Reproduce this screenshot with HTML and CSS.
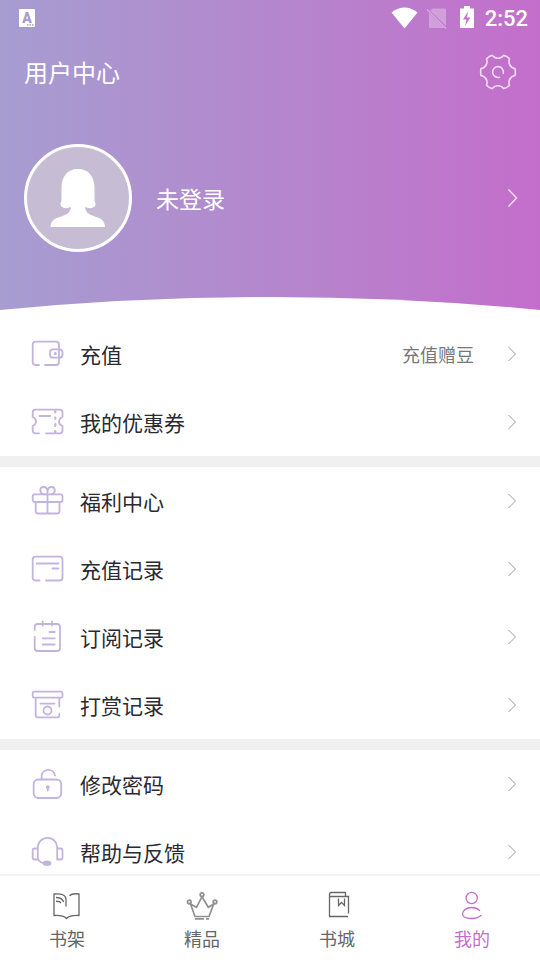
FILE: index.html
```html
<!DOCTYPE html>
<html lang="zh-CN">
<head>
<meta charset="utf-8">
<meta name="viewport" content="width=device-width, initial-scale=1">
<title>用户中心</title>
<link rel="stylesheet" href="styles.css">
</head>
<body>
<div class="app">
  <header class="hero">
    <div class="status">
      <span class="status-app">A<svg class="dots" width="7" height="2" viewBox="0 0 7 2" aria-hidden="true"><path d="M0 1H7" stroke="#a99ad0" stroke-width="1.500" stroke-dasharray="1.500 1"/></svg></span>
      <svg class="status-icons" width="86" height="24" viewBox="0 0 86 24" aria-hidden="true">
        <path d="M0.500 6.500Q13.500-3.500 26.500 6.500L13.500 22.500Z" fill="#fff"/>
        <path d="M42 2.500h11.500q1.500 0 1.500 1.500v16L39 4.500zM38 7l15.500 15H39.500q-1.500 0-1.500-1.500z" fill="#fff" opacity=".3"/>
        <path d="M36 3.500L55 22.500" stroke="#fff" stroke-width="1.500" opacity=".35"/>
        <path fill-rule="evenodd" d="M69 2.500h4v-2.500h6v2.500h4v19.500h-14zM77 5.500l-5 8h3.500l-1.500 6.500 5.500-8.500h-3.500z" fill="#fff"/>
      </svg>
      <time class="clock">2:52</time>
    </div>
    <div class="titlebar">
      <h1 class="title">用户中心</h1>
      <button class="icon-button" type="button" aria-label="设置">
        <svg width="36" height="36" viewBox="-18 -18 36 36" fill="none" stroke="#fff" stroke-opacity=".75" stroke-width="1.600" stroke-linejoin="round" stroke-linecap="round">
          <path d="M17 -3.500Q17.700 0 17 3.500A7 7 0 0 0 11.500 13.200Q9 16 5.600 16.600A7 7 0 0 0 -5.600 16.600Q-9 16 -11.500 13.200A7 7 0 0 0 -17 3.500Q-17.700 0 -17 -3.500A7 7 0 0 0 -11.500 -13.200Q-9 -16 -5.600 -16.600A7 7 0 0 0 5.600 -16.600Q9 -16 11.500 -13.200A7 7 0 0 0 17 -3.500Z"/>
          <path d="M5.200 1.500A5.400 5.400 0 1 0 1.500 5.200"/>
        </svg>
      </button>
    </div>
    <a class="profile" href="#login">
      <svg class="avatar" width="108" height="108" viewBox="0 0 108 108" aria-hidden="true">
        <circle cx="54" cy="54" r="52.500" fill="#c6bdd5" stroke="#fff" stroke-width="3"/>
        <path d="M54 25C43 25 37.500 33 37.500 44L37.500 57Q35.500 60 37.300 62.500Q41 65.500 47 63Q47 68 41 71C34 74 27 74 26.500 83H81C80.500 74 74 74 67 71Q61 68 61 63Q67 65.500 70.700 62.500Q72.500 60 70.500 57L70.500 44C70.500 33 65 25 54 25Z" fill="#fff"/>
      </svg>
      <span class="profile-name">未登录</span>
      <svg class="profile-arrow" width="12" height="20" viewBox="0 0 12 20" aria-hidden="true"><path d="M1.500 1.500L9.500 10L1.500 18.500" fill="none" stroke="#fff" stroke-opacity=".75" stroke-width="1.500"/></svg>
    </a>
    <svg class="curve" viewBox="0 0 540 13" preserveAspectRatio="none" aria-hidden="true"><path d="M0 13Q135 0 270 0T540 13Z" fill="#fff"/></svg>
  </header>

  <main class="menu">
    <section class="group">
      <a class="row" href="#recharge">
        <svg class="row-icon" viewBox="0 0 36 36"><path d="M9 29H5.500Q2.700 29 2.700 26V8.500Q2.700 5.700 5.500 5.700H26Q29 5.700 29 8.500V26Q29 29 26 29H15"/><rect x="20" y="13.300" width="12.500" height="8.400" rx="3"/><circle cx="25.300" cy="17.500" r=".7"/></svg>
        <span class="label">充值</span><span class="note">充值赠豆</span>
        <svg class="arrow" viewBox="0 0 10 16"><path d="M1.500 1L8.500 8L1.500 15"/></svg>
      </a>
      <a class="row" href="#coupons">
        <svg class="row-icon" viewBox="0 0 36 36"><path d="M9 29.300H5.500Q2.700 29.300 2.700 26.500V22Q6 20.500 6 17.500T2.700 13V8.500Q2.700 5.700 5.500 5.700H29.700Q32.500 5.700 32.500 8.500V13Q29 14.500 29 17.500T32.500 22V26.500Q32.500 29.300 29.700 29.300H16"/><path class="bold" d="M9.500 12H20M25.300 7V8.500M25.300 13.500V15M25.300 20V22M25.300 27V28.500"/></svg>
        <span class="label">我的优惠券</span>
        <svg class="arrow" viewBox="0 0 10 16"><path d="M1.500 1L8.500 8L1.500 15"/></svg>
      </a>
    </section>
    <section class="group">
      <a class="row" href="#welfare">
        <svg class="row-icon" viewBox="0 0 36 36"><rect x="2.700" y="11.300" width="29.800" height="7.700" rx="2"/><path d="M5.700 19V28Q5.700 30.500 8 30.500H27Q29.500 30.500 29.500 28V19M17.500 8V30.500M17.500 11.300H13.500Q10.300 10.500 10.300 7.500Q10.300 4 13.500 4Q17 4 17.500 8Q18 4 21.500 4Q24.800 4 24.800 7.500Q24.800 10.500 21.500 11.300"/></svg>
        <span class="label">福利中心</span>
        <svg class="arrow" viewBox="0 0 10 16"><path d="M1.500 1L8.500 8L1.500 15"/></svg>
      </a>
      <a class="row" href="#recharge-log">
        <svg class="row-icon" viewBox="0 0 36 36"><path d="M9.500 29.500H5.500Q2.700 29.500 2.700 26.500V8.500Q2.700 5.700 5.500 5.700H29.700Q32.500 5.700 32.500 8.500V26.500Q32.500 29.500 29.700 29.500H16M6.700 12.500H28.500M22.500 17.500H28.500"/></svg>
        <span class="label">充值记录</span>
        <svg class="arrow" viewBox="0 0 10 16"><path d="M1.500 1L8.500 8L1.500 15"/></svg>
      </a>
      <a class="row" href="#subscriptions">
        <svg class="row-icon" viewBox="0 0 36 36"><path d="M4.700 11V8Q4.700 5 7.700 5H27Q30 5 30 8V29Q30 32 27 32H7.700Q4.700 32 4.700 29V18M12.700 2.500V6.500M22 2.500V6.500M19.500 13H24.700M12.700 19.300H24.700M12.700 25.500H24.700"/></svg>
        <span class="label">订阅记录</span>
        <svg class="arrow" viewBox="0 0 10 16"><path d="M1.500 1L8.500 8L1.500 15"/></svg>
      </a>
      <a class="row" href="#rewards">
        <svg class="row-icon" viewBox="0 0 36 36"><rect x="2.700" y="4.700" width="29.800" height="6" rx="1.500"/><path d="M29.300 11V19.500M29.300 27V28.500Q29.300 30.300 27.500 30.300H7.700Q5.700 30.300 5.700 28.500V11M10.500 16.700H24.500"/><circle cx="17.500" cy="23.500" r="4"/></svg>
        <span class="label">打赏记录</span>
        <svg class="arrow" viewBox="0 0 10 16"><path d="M1.500 1L8.500 8L1.500 15"/></svg>
      </a>
    </section>
    <section class="group">
      <a class="row" href="#password">
        <svg class="row-icon" viewBox="0 0 36 36"><rect x="3.700" y="13.500" width="27.500" height="18.500" rx="4.500"/><path d="M11.700 13.500V9.700A6.700 6.700 0 0 1 25 9.700M17.800 22V24.500"/><circle cx="17.800" cy="21.200" r="1"/></svg>
        <span class="label">修改密码</span>
        <svg class="arrow" viewBox="0 0 10 16"><path d="M1.500 1L8.500 8L1.500 15"/></svg>
      </a>
      <a class="row" href="#help">
        <svg class="row-icon" viewBox="0 0 36 36"><path d="M7.800 14.500H4.500Q2.700 14.500 2.700 16.500V23.500Q2.700 25.500 4.500 25.500H7.800M27.200 14.500H30.500Q32.500 14.500 32.500 16.500V23.500Q32.500 25.500 30.500 25.500H27.200M13 29Q7.800 27.500 7.800 23V13.500A9.700 9.700 0 0 1 27.200 13.500V25.500"/><ellipse class="mic" cx="17" cy="29.300" rx="3.500" ry="1.800"/></svg>
        <span class="label">帮助与反馈</span>
        <svg class="arrow" viewBox="0 0 10 16"><path d="M1.500 1L8.500 8L1.500 15"/></svg>
      </a>
    </section>
  </main>

  <nav class="tabs">
    <a class="tab" href="#shelf">
      <svg class="tab-icon" viewBox="0 0 36 36"><path d="M17 18.500V11Q16.500 5 5 6V27.500Q14 27 17.500 30.500Q21 27 30 27.500V6Q23 5 20.500 7.700M7 9.500Q13 9.500 14.700 14M7 13.300Q10.500 13 12 15"/></svg>
      <span>书架</span>
    </a>
    <a class="tab" href="#featured">
      <svg class="tab-icon crown" viewBox="0 0 36 36"><circle cx="5.300" cy="14" r="1.800"/><circle cx="18" cy="6.700" r="1.800"/><circle cx="31" cy="14" r="1.800"/><path d="M6.500 16L11 28.500H25L29.700 16L24.300 19.300L18 8.700L12.500 19.300ZM11 30.800H20M22 30.800H25"/></svg>
      <span>精品</span>
    </a>
    <a class="tab" href="#store">
      <svg class="tab-icon" viewBox="0 0 36 36"><path d="M29 28.500H10.500V6.500Q10.500 4.500 12.500 4.500H26.500V8.500M10.500 8.500H29.500V25.500M19.500 10.500V17.500L22.500 14.500L25.500 17.500V10.500"/></svg>
      <span>书城</span>
    </a>
    <a class="tab active" href="#me" aria-current="page">
      <svg class="tab-icon" viewBox="0 0 36 36"><circle cx="17.700" cy="10" r="5.600"/><path d="M26 22.700Q22.500 19.500 17.700 19.500C12 19.500 8.500 23 8.500 26C8.500 29 12 30.500 17.700 30.500Q24 30.500 27.500 27"/></svg>
      <span>我的</span>
    </a>
  </nav>
</div>
</body>
</html>
```
FILE: styles.css
```css
* {
  box-sizing: border-box;
}

body {
  margin: 0;
  font-family: "Noto Sans CJK SC", sans-serif;
  color: #2a2a32;
  background: #fff;
}

a {
  color: inherit;
  text-decoration: none;
}

.app {
  display: flex;
  flex-direction: column;
  height: 100vh;
}

.hero {
  display: flex;
  flex-direction: column;
  flex: none;
  color: #fff;
  background: linear-gradient(90deg, #a69dd1, #b487cd 50%, #c46ecb);
}

.status {
  display: flex;
  align-items: center;
  height: 36px;
  padding: 0 12px 0 19px;
}

.status-app {
  position: relative;
  width: 16px;
  height: 18px;
  border-radius: 1px;
  background: #fff;
  color: #a99ad0;
  font: 900 14px/18px Roboto, sans-serif;
  text-align: center;
}

.dots {
  position: absolute;
  right: 1px;
  bottom: 1px;
}

.status-icons {
  margin-left: auto;
  margin-right: 8px;
}

.clock {
  font: 500 22px/24px Roboto, sans-serif;
  padding-top: 2px;
}

.titlebar {
  display: flex;
  align-items: center;
  justify-content: space-between;
  height: 72px;
  padding: 0 24px;
}

.title {
  margin: 0;
  font-size: 24px;
  font-weight: 400;
  line-height: 36px;
}

.icon-button {
  padding: 0;
  border: 0;
  background: none;
}

.icon-button svg {
  display: block;
  overflow: visible;
}

.profile {
  display: flex;
  align-items: center;
  gap: 24px;
  margin: 36px 21px 45px 24px;
}

.profile-name {
  flex: 1;
  font-size: 23px;
  line-height: 36px;
}

.curve {
  display: block;
  width: 100%;
  height: 13px;
}

.menu {
  flex: 1;
  min-height: 0;
  padding-top: 10px;
  overflow: hidden;
}

.group + .group {
  border-top: 11px solid #f0f0f0;
}

.row {
  display: flex;
  align-items: center;
  height: 68px;
  padding: 0 23px 0 30px;
}

.row-icon {
  width: 36px;
  height: 36px;
  margin-right: 14px;
  fill: none;
  stroke: #c3b4df;
  stroke-width: 1.8;
  stroke-linecap: round;
  stroke-linejoin: round;
}

.bold {
  stroke-width: 2.2;
}

.mic {
  fill: #c3b4df;
}

.label {
  flex: 1;
  font-size: 21px;
  line-height: 32px;
}

.note {
  margin-right: 33px;
  color: #777;
  font-size: 18px;
  line-height: 28px;
}

.arrow {
  width: 10px;
  height: 16px;
  fill: none;
  stroke: #999;
  stroke-width: 1;
}

.tabs {
  display: flex;
  flex: none;
  border-top: 2px solid #f4f4f4;
  background: #fff;
}

.tab {
  display: flex;
  flex: 1;
  flex-direction: column;
  align-items: center;
  padding: 12px 1px 8px 0;
  color: #666;
  font-size: 18px;
  line-height: 28px;
}

.tab-icon {
  width: 36px;
  height: 36px;
  fill: none;
  stroke: currentColor;
  stroke-width: 1.3;
}

.crown {
  stroke: #909090;
  stroke-width: 1.7;
}

.active {
  color: #c46ecb;
}
```
